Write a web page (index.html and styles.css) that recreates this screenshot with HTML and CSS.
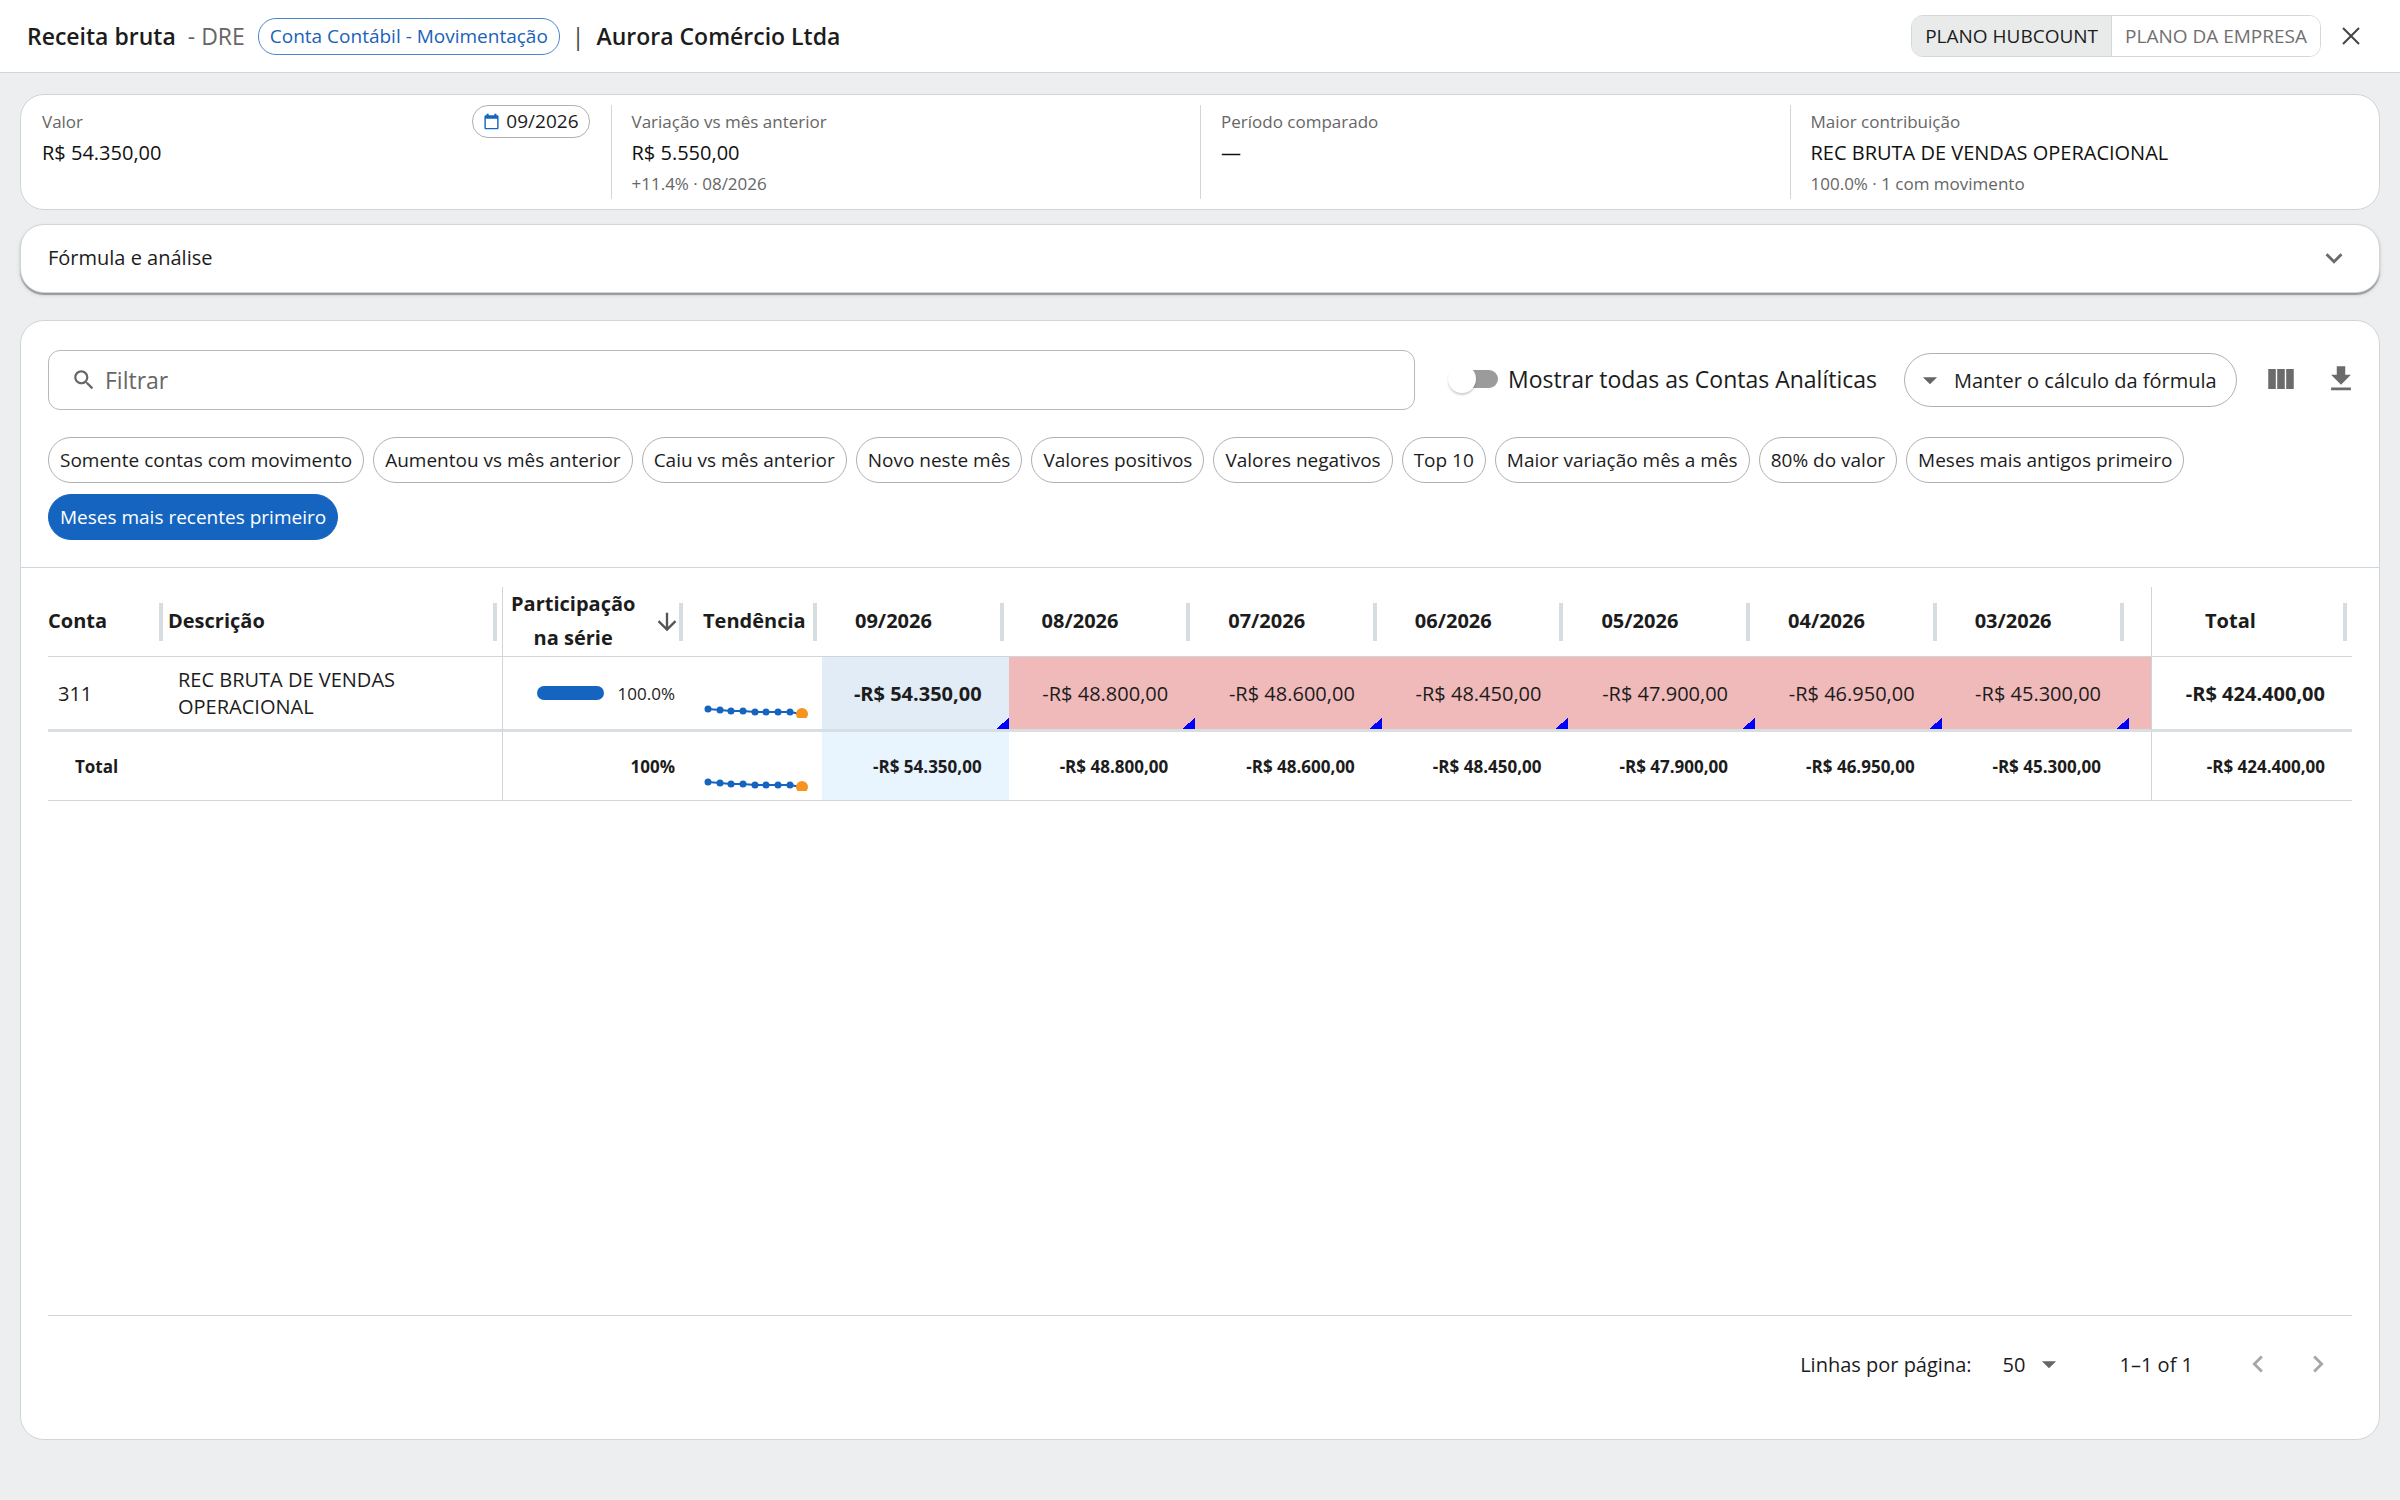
FILE: index.html
```html
<!DOCTYPE html>
<html lang="pt-BR">
<head>
<meta charset="utf-8">
<meta name="viewport" content="width=device-width, initial-scale=1">
<title>Receita bruta - DRE</title>
<link rel="stylesheet" href="styles.css">
</head>
<body>
<svg class="defs" aria-hidden="true">
  <symbol id="caret" viewBox="0 0 24 24"><path d="M7 10l5 5 5-5z"/></symbol>
  <symbol id="spark" viewBox="0 0 106 50">
    <polyline points="5,41 17,42 28,43 40,43 52,44 63,44 75,44 87,44 98,46" fill="none" stroke="#1565c0" stroke-width="2"/>
    <g fill="#1565c0"><circle cx="5" cy="41" r="3.500"/><circle cx="17" cy="42" r="3.500"/><circle cx="28" cy="43" r="3.500"/><circle cx="40" cy="43" r="3.500"/><circle cx="52" cy="44" r="3.500"/><circle cx="63" cy="44" r="3.500"/><circle cx="75" cy="44" r="3.500"/><circle cx="87" cy="44" r="3.500"/></g>
    <circle cx="99" cy="46" r="6" fill="#f7931e"/>
  </symbol>
</svg>

<header class="topbar">
  <h1 class="title">Receita bruta</h1>
  <span class="subtitle">- DRE</span>
  <span class="tag">Conta Contábil - Movimentação</span>
  <span class="bar">|</span>
  <strong class="company">Aurora Comércio Ltda</strong>
  <div class="plans">
    <button type="button" class="plan plan-on" aria-pressed="true">PLANO HUBCOUNT</button>
    <button type="button" class="plan" aria-pressed="false">PLANO DA EMPRESA</button>
  </div>
  <button type="button" class="icon-btn close" aria-label="Fechar">
    <svg width="20" height="20" viewBox="0 0 20 20" fill="none" stroke="currentColor" stroke-width="2"><path d="M2 2l16 16M18 2L2 18"/></svg>
  </button>
</header>

<main class="page">
  <section class="card kpis">
    <div class="kpi kpi-split">
      <div>
        <p class="kpi-label">Valor</p>
        <p class="kpi-value">R$ 54.350,00</p>
      </div>
      <button type="button" class="month">
        <svg width="17" height="17" viewBox="0 0 24 24" fill="#1565c0"><path d="M20 3h-1V1h-3v2H8V1H5v2H4c-1.100 0-2 .9-2 2v16c0 1.100.9 2 2 2h16c1.100 0 2-.9 2-2V5c0-1.100-.9-2-2-2zm0 18H4V8h16v13z"/></svg>
        09/2026
      </button>
    </div>
    <div class="kpi">
      <p class="kpi-label">Variação vs mês anterior</p>
      <p class="kpi-value">R$ 5.550,00</p>
      <p class="kpi-label">+11.4% · 08/2026</p>
    </div>
    <div class="kpi">
      <p class="kpi-label">Período comparado</p>
      <p class="kpi-value">—</p>
    </div>
    <div class="kpi">
      <p class="kpi-label">Maior contribuição</p>
      <p class="kpi-value">REC BRUTA DE VENDAS OPERACIONAL</p>
      <p class="kpi-label">100.0% · 1 com movimento</p>
    </div>
  </section>

  <button type="button" class="card accordion" aria-expanded="false">
    Fórmula e análise
    <svg width="34" height="34" viewBox="0 0 24 24" fill="currentColor"><path d="M7.410 8.590 12 13.170l4.590-4.580L18 10l-6 6-6-6z"/></svg>
  </button>

  <section class="card panel">
    <div class="filters">
      <div class="toolbar">
        <label class="search">
          <svg width="26" height="26" viewBox="0 0 24 24" fill="currentColor"><path d="M15.500 14h-.79l-.28-.27C15.410 12.590 16 11.110 16 9.500 16 5.910 13.090 3 9.500 3S3 5.910 3 9.500 5.910 16 9.500 16c1.610 0 3.090-.59 4.230-1.570l.27.28v.79l5 4.990L20.490 19l-4.990-5zm-6 0C7.010 14 5 11.990 5 9.500S7.010 5 9.500 5 14 7.010 14 9.500 11.990 14 9.500 14z"/></svg>
          <input type="text" placeholder="Filtrar" aria-label="Filtrar">
        </label>
        <label class="switch">
          <input type="checkbox" role="switch">
          Mostrar todas as Contas Analíticas
        </label>
        <div class="mode">
          <svg width="34" height="34" fill="currentColor"><use href="#caret"/></svg>
          <select aria-label="Modo de cálculo"><option>Manter o cálculo da fórmula</option></select>
        </div>
        <div class="tools">
          <button type="button" class="icon-btn" aria-label="Colunas">
            <svg width="34" height="34" viewBox="0 0 24 24" fill="currentColor"><path d="M14.670 5v14H9.330V5h5.340zm1 14H21V5h-5.330v14zm-7.340 0V5H3v14h5.330z"/></svg>
          </button>
          <button type="button" class="icon-btn" aria-label="Baixar">
            <svg width="34" height="34" viewBox="0 0 24 24" fill="currentColor"><path d="M19 9h-4V3H9v6H5l7 7 7-7zM5 18v2h14v-2H5z"/></svg>
          </button>
        </div>
      </div>
      <div class="chips">
        <button type="button" class="chip">Somente contas com movimento</button>
        <button type="button" class="chip">Aumentou vs mês anterior</button>
        <button type="button" class="chip">Caiu vs mês anterior</button>
        <button type="button" class="chip">Novo neste mês</button>
        <button type="button" class="chip">Valores positivos</button>
        <button type="button" class="chip">Valores negativos</button>
        <button type="button" class="chip">Top 10</button>
        <button type="button" class="chip">Maior variação mês a mês</button>
        <button type="button" class="chip">80% do valor</button>
        <button type="button" class="chip">Meses mais antigos primeiro</button>
        <button type="button" class="chip chip-on" aria-pressed="true">Meses mais recentes primeiro</button>
      </div>
    </div>

    <div class="grid">
      <table>
        <colgroup>
          <col class="c-conta"><col class="c-desc"><col class="c-part"><col class="c-tend">
          <col class="c-month"><col class="c-month"><col class="c-month"><col class="c-month"><col class="c-month"><col class="c-month"><col>
          <col class="c-total">
        </colgroup>
        <thead>
          <tr>
            <th>Conta</th>
            <th>Descrição</th>
            <th class="line part">
              <button type="button" class="sort">
                <span>Participação<br>na série</span>
                <svg width="28" height="28" viewBox="0 0 24 24" fill="currentColor"><path d="M20 12l-1.410-1.410L13 16.170V4h-2v12.170l-5.580-5.590L4 12l8 8 8-8z"/></svg>
              </button>
            </th>
            <th class="trend">Tendência</th>
            <th class="mon">09/2026</th>
            <th class="mon">08/2026</th>
            <th class="mon">07/2026</th>
            <th class="mon">06/2026</th>
            <th class="mon">05/2026</th>
            <th class="mon">04/2026</th>
            <th class="mon last">03/2026</th>
            <th class="line sum">Total</th>
          </tr>
        </thead>
        <tbody>
          <tr>
            <td class="text">311</td>
            <td class="text">REC BRUTA DE VENDAS OPERACIONAL</td>
            <td class="line share"><div class="share-row"><span class="meter"></span>100.0%</div></td>
            <td class="trend"><svg width="106" height="50"><use href="#spark"/></svg></td>
            <td class="num mark now">-R$ 54.350,00</td>
            <td class="num mark low">-R$ 48.800,00</td>
            <td class="num mark low">-R$ 48.600,00</td>
            <td class="num mark low">-R$ 48.450,00</td>
            <td class="num mark low">-R$ 47.900,00</td>
            <td class="num mark low">-R$ 46.950,00</td>
            <td class="num mark low last">-R$ 45.300,00</td>
            <td class="num line strong">-R$ 424.400,00</td>
          </tr>
        </tbody>
        <tfoot>
          <tr>
            <th class="total-label" colspan="2">Total</th>
            <td class="line share">100%</td>
            <td class="trend"><svg width="106" height="50"><use href="#spark"/></svg></td>
            <td class="num now">-R$ 54.350,00</td>
            <td class="num">-R$ 48.800,00</td>
            <td class="num">-R$ 48.600,00</td>
            <td class="num">-R$ 48.450,00</td>
            <td class="num">-R$ 47.900,00</td>
            <td class="num">-R$ 46.950,00</td>
            <td class="num last">-R$ 45.300,00</td>
            <td class="num line">-R$ 424.400,00</td>
          </tr>
        </tfoot>
      </table>
    </div>

    <div class="pager">
      <label for="rows">Linhas por página:</label>
      <div class="rows">
        <select id="rows"><option>50</option></select>
        <svg width="34" height="34" fill="currentColor"><use href="#caret"/></svg>
      </div>
      <span class="range">1–1 of 1</span>
      <div class="steps">
        <button type="button" class="icon-btn" aria-label="Página anterior" disabled>
          <svg width="34" height="34" viewBox="0 0 24 24" fill="currentColor"><path d="M15.410 16.590 10.830 12l4.580-4.590L14 6l-6 6 6 6z"/></svg>
        </button>
        <button type="button" class="icon-btn" aria-label="Próxima página" disabled>
          <svg width="34" height="34" viewBox="0 0 24 24" fill="currentColor"><path d="M8.590 16.590 13.170 12 8.590 7.410 10 6l6 6-6 6z"/></svg>
        </button>
      </div>
    </div>
  </section>
</main>
</body>
</html>
```
FILE: styles.css
```css
* { box-sizing: border-box; }

body {
  margin: 0;
  min-height: 100vh;
  display: flex;
  flex-direction: column;
  background: #eceef0;
  color: #1c1c1c;
  font: 400 20px/31px "Open Sans", sans-serif;
}

button, input, select { font: inherit; color: inherit; }
button { cursor: pointer; }
svg { display: block; flex: none; }
.defs { position: absolute; width: 0; height: 0; }

/* Top bar */
.topbar {
  display: flex;
  align-items: center;
  height: 73px;
  padding: 0 39px 0 27px;
  background: #fff;
  border-bottom: 1px solid #d0d5d7;
  font-size: 23px;
}
.title, .company { margin: 0; font-size: 23px; font-weight: 600; }
.subtitle { margin: 0 13px 0 12px; color: #666; }
.tag {
  height: 37px;
  padding: 0 11px;
  border: 1px solid #4a86cf;
  border-radius: 18px;
  color: #1b62b8;
  font-size: 19px;
  line-height: 34px;
}
.bar { margin: 0 12px; color: #444; }
.plans {
  display: flex;
  height: 42px;
  margin-left: auto;
  overflow: hidden;
  border: 1px solid #d3d8d9;
  border-radius: 12px;
}
.plan {
  padding: 0 13px;
  border: 0;
  background: #fff;
  color: #707070;
  font-size: 19px;
}
.plan + .plan { border-left: 1px solid #d3d8d9; }
.plan-on { background: #e9ebeb; color: #1c1c1c; }
.icon-btn {
  display: flex;
  padding: 0;
  border: 0;
  background: none;
  color: #6b6b6b;
}
.close { margin-left: 20px; color: #444; }

/* Page */
.page {
  flex: 1;
  display: flex;
  flex-direction: column;
  padding: 21px 20px 60px;
}
.card {
  background: #fff;
  border: 1px solid #d0d5d7;
  border-radius: 24px;
}

/* Indicators */
.kpis { display: grid; grid-template-columns: repeat(4, 1fr); padding: 10px 0; }
.kpi { min-height: 94px; padding: 1px 20px 0; }
.kpi + .kpi { border-left: 1px solid #d0d5d7; }
.kpi-split { display: flex; justify-content: space-between; align-items: flex-start; padding: 0 21px; }
.kpi-split > div { padding-top: 1px; }
.kpi p { margin: 0; }
.kpi-label { color: #666; font-size: 17px; }
.kpi-value { color: #111; font-weight: 500; }
.month {
  display: flex;
  align-items: center;
  gap: 6px;
  height: 33px;
  padding: 0 10px;
  border: 1px solid #b0b0b0;
  border-radius: 16px;
  background: #fff;
  font-size: 19px;
}

.accordion {
  display: flex;
  justify-content: space-between;
  align-items: center;
  height: 69px;
  margin: 14px 0 27px;
  padding: 0 28px 2px 27px;
  box-shadow: 0 2px 1px rgba(0, 0, 0, .3), 0 2px 4px rgba(0, 0, 0, .12);
  text-align: left;
}
.accordion svg { color: #6b6b6b; }

/* Filters */
.panel { flex: 1; display: flex; flex-direction: column; }
.filters { padding: 29px 27px 27px; border-bottom: 1px solid #d0d5d7; }
.toolbar { display: flex; align-items: center; margin-bottom: 27px; }
.search {
  flex: 1;
  display: flex;
  align-items: center;
  gap: 8px;
  height: 60px;
  padding: 0 22px;
  border: 1px solid #b8b8b8;
  border-radius: 12px;
  color: #666;
  font-size: 23px;
}
.search input { flex: 1; min-width: 0; padding: 0; border: 0; outline: 0; background: none; }
.search input::placeholder { color: #666; opacity: 1; }
.switch {
  display: flex;
  align-items: center;
  gap: 10px;
  margin-left: 32px;
  padding-bottom: 2px;
  font-size: 23px;
}
.switch input {
  appearance: none;
  display: flex;
  align-items: center;
  width: 44px;
  height: 18px;
  margin: 0 0 0 7px;
  border-radius: 9px;
  background: #9b9b9b;
}
.switch input::before {
  content: "";
  flex: none;
  width: 28px;
  height: 28px;
  margin-left: -6px;
  border-radius: 50%;
  background: #fff;
  box-shadow: 0 2px 2px rgba(0, 0, 0, .18);
}
.mode {
  display: flex;
  align-items: center;
  gap: 7px;
  height: 54px;
  margin-left: 27px;
  padding: 0 19px 0 8px;
  border: 1px solid #b0b0b0;
  border-radius: 27px;
}
.mode svg, .rows svg { color: #666; }
select { appearance: none; padding: 0; border: 0; background: none; }
.tools { display: flex; gap: 26px; margin: 0 -6px 0 27px; padding-bottom: 2px; }
.chips { display: flex; flex-wrap: wrap; gap: 11px 9px; }
.chip {
  height: 46px;
  padding: 0 11px;
  border: 1px solid #b0b0b0;
  border-radius: 23px;
  background: #fff;
  font-size: 19px;
}
.chip-on { border-color: #1565c0; background: #1565c0; color: #fff; }

/* Accounts table */
.grid { flex: 1; margin: 19px 27px 0; border-bottom: 1px solid #d0d5d7; }
table { width: 100%; table-layout: fixed; border-collapse: separate; border-spacing: 0; }
.c-conta { width: 120px; }
.c-desc { width: 334px; }
.c-part { width: 186px; }
.c-tend { width: 134px; }
.c-month { width: 8.1%; }
.c-total { width: 201px; }
th, td { padding: 0; text-align: left; }
thead th {
  height: 70px;
  padding-bottom: 2px;
  border-bottom: 1px solid #d0d5d7;
  background: linear-gradient(#d5dde0, #d5dde0) no-repeat right 5px center / 4px 38px;
  font-weight: 700;
}
thead .part { padding: 0; }
.sort {
  display: flex;
  align-items: center;
  gap: 18px;
  height: 69px;
  padding: 0 0 0 8px;
  border: 0;
  background: none;
  font-weight: 700;
  line-height: 34px;
  text-align: center;
}
.sort span { padding-bottom: 2px; }
.sort svg { color: #555; }
.line { border-left: 1px solid #d0d5d7; }
.trend { padding-left: 15px; }
thead .mon { padding-left: 33px; }
thead .last { background-position: right 27px center; }
thead .sum { padding-left: 53px; }
tbody td { height: 75px; border-bottom: 3px solid #d7dfe2; line-height: 27px; }
.text { padding: 0 60px 0 10px; }
td:first-child { padding-right: 0; }
.share { padding-right: 13px; text-align: right; font-size: 17px; }
.share-row { display: flex; justify-content: flex-end; align-items: center; gap: 14px; }
.meter { width: 67px; height: 14px; border-radius: 7px; background: #1565c0; }
.num { padding-right: 27px; text-align: right; background-clip: padding-box; }
.num.last { padding-right: 50px; }
.mark {
  background-image: linear-gradient(136deg, transparent 50%, #00f 50%);
  background-repeat: no-repeat;
  background-position: right bottom;
  background-size: 12px 12px;
}
.mark.last { background-position: right 22px bottom; }
.low { background-color: #f0babb; }
tbody .now { background-color: #e2ecf6; }
tbody .now, .strong { font-weight: 700; }
tfoot th, tfoot td {
  height: 69px;
  border-bottom: 1px solid #d0d5d7;
  font-size: 17px;
  font-weight: 700;
}
tfoot .now { background-color: #e8f4fe; }
.total-label { padding-left: 27px; }

/* Pagination */
.pager {
  display: flex;
  justify-content: flex-end;
  align-items: center;
  height: 123px;
  padding: 0 44px 27px;
}
.rows { display: flex; align-items: center; gap: 6px; margin: 0 54px 0 31px; }
.steps { display: flex; gap: 26px; margin-left: 48px; }
.icon-btn:disabled { color: #a6a6a6; }
```
